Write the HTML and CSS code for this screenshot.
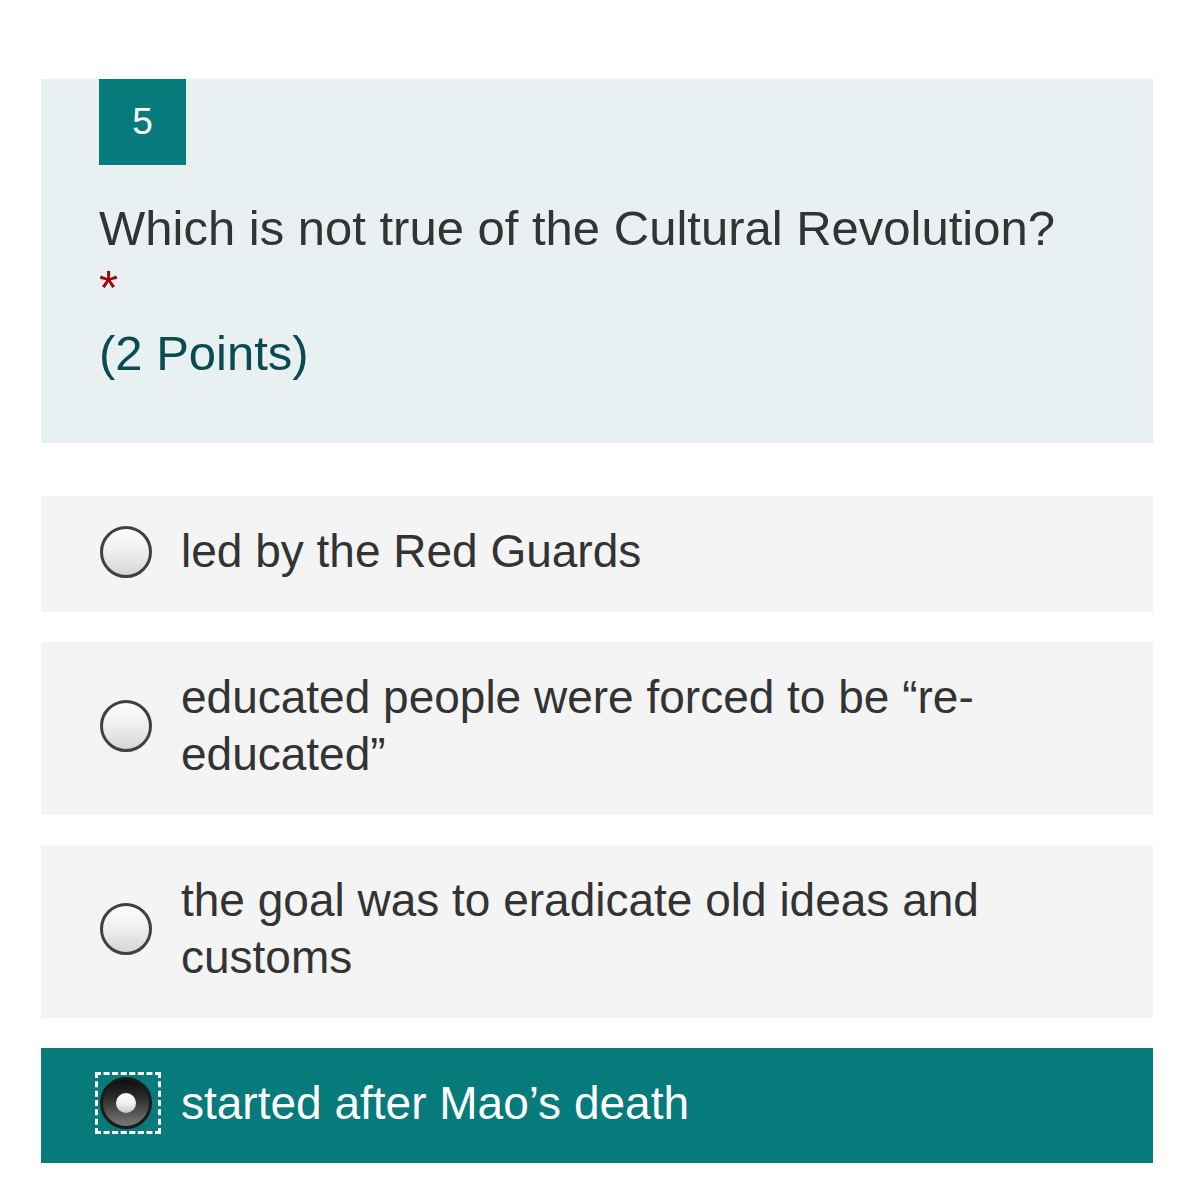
FILE: index.html
```html
<!DOCTYPE html>
<html lang="en">
<head>
<meta charset="utf-8">
<title>Question 5</title>
<link rel="stylesheet" href="styles.css">
</head>
<body>
<div class="question">
  <div class="header">
    <div class="badge">5</div>
    <div class="title">Which is not true of the Cultural Revolution?</div>
    <div class="required">*</div>
    <div class="points">(2 Points)</div>
  </div>
  <div class="options">
    <label class="option">
      <span class="radio"></span>
      <span class="text">led by the Red Guards</span>
    </label>
    <label class="option">
      <span class="radio"></span>
      <span class="text">educated people were forced to be “re-educated”</span>
    </label>
    <label class="option">
      <span class="radio"></span>
      <span class="text">the goal was to eradicate old ideas and customs</span>
    </label>
    <label class="option selected">
      <span class="radio checked"></span>
      <span class="text">started after Mao’s death</span>
    </label>
  </div>
</div>
</body>
</html>
```
FILE: styles.css
```css
html, body {
  margin: 0;
  padding: 0;
  background: #ffffff;
}

body {
  font-family: "Liberation Sans", Arial, Helvetica, sans-serif;
  color: #333333;
}

.question {
  width: 1112px;
  margin-left: 41px;
  padding-top: 79px;
}

.header {
  background: #e8f0f2;
  padding: 0 58px 60px 58px;
}

.badge {
  width: 87px;
  height: 86px;
  background: #077a7c;
  color: #ffffff;
  font-size: 37px;
  display: flex;
  align-items: center;
  justify-content: center;
}

.title {
  font-size: 49px;
  line-height: 59px;
  margin-top: 34px;
  color: #333333;
}

.required {
  font-size: 49px;
  line-height: 50px;
  margin-top: 4px;
  color: #a80000;
}

.points {
  font-size: 49px;
  line-height: 59px;
  margin-top: 12px;
  color: #0b4b50;
}

.options {
  display: flex;
  flex-direction: column;
  gap: 30px;
  margin-top: 53px;
}

.option {
  display: flex;
  align-items: center;
  gap: 29px;
  background: #f4f4f4;
  padding: 27px 58px 31px 59px;
  font-size: 46px;
  line-height: 57.5px;
  color: #333333;
}

.option.selected {
  background: #077a7c;
  color: #ffffff;
}

.radio {
  flex: none;
  position: relative;
  width: 46px;
  height: 46px;
  border: 3px solid #404040;
  border-radius: 50%;
  background: linear-gradient(to bottom, #fdfdfd 0%, #f0f0f0 45%, #d6d6d6 100%);
}

.radio.checked {
  border-color: #1a1a1a;
  background: linear-gradient(to bottom, #0e0e0e 0%, #2e2e2e 40%, #7a7a7a 100%);
  display: flex;
  align-items: center;
  justify-content: center;
}

.radio.checked::before {
  content: "";
  width: 20px;
  height: 20px;
  border-radius: 50%;
  background: linear-gradient(to bottom, #ffffff 0%, #f2f2f2 50%, #c9c9c9 100%);
}

.radio.checked::after {
  content: "";
  position: absolute;
  top: -8px;
  left: -8px;
  right: -12px;
  bottom: -8px;
  border: 3px dashed #ffffff;
}

.text {
  flex: 1;
}
```
